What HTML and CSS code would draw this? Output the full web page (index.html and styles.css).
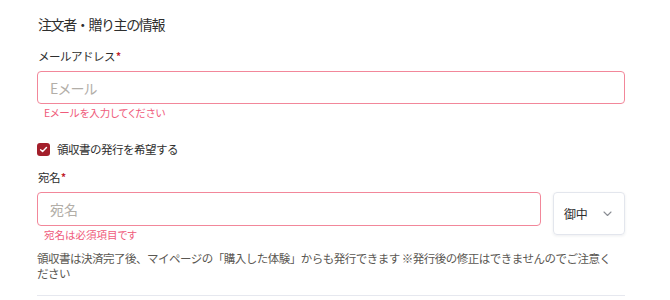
FILE: index.html
```html
<!DOCTYPE html>
<html lang="ja">
<head>
<meta charset="utf-8">
<link rel="stylesheet" href="styles.css">
</head>
<body>
<div class="form">
  <h2 class="heading">注文者・贈り主の情報</h2>

  <div class="label">メールアドレス<span class="req">*</span></div>
  <div class="input error-input"><span class="placeholder">Eメール</span></div>
  <div class="error">Eメールを入力してください</div>

  <label class="check-row">
    <span class="checkbox">
      <svg width="9" height="9" viewBox="0 0 10 10"><path d="M1.8 5.2 L4 7.3 L8.3 2.8" fill="none" stroke="#fff" stroke-width="1.6" stroke-linecap="round" stroke-linejoin="round"/></svg>
    </span>
    <span class="check-label">領収書の発行を希望する</span>
  </label>

  <div class="label label-name">宛名<span class="req">*</span></div>
  <div class="name-row">
    <div class="name-col">
      <div class="input error-input input-name"><span class="placeholder">宛名</span></div>
      <div class="error">宛名は必須項目です</div>
    </div>
    <div class="select">
      <span class="select-text">御中</span>
      <svg class="chevron" width="9" height="6" viewBox="0 0 9 6"><path d="M1 1 L4.5 4.5 L8 1" fill="none" stroke="#8a8d94" stroke-width="1.1" stroke-linecap="round" stroke-linejoin="round"/></svg>
    </div>
  </div>

  <p class="note">領収書は決済完了後、マイページの「購入した体験」からも発行できます ※発行後の修正はできませんのでご注意ください</p>

  <div class="divider"></div>
</div>
</body>
</html>
```
FILE: styles.css
```css
html, body {
  margin: 0;
  padding: 0;
  background: #fff;
}
body {
  font-family: "Noto Sans CJK JP", "Noto Sans", sans-serif;
  color: #2e2e2e;
}
.form {
  width: 588px;
  padding: 14px 0 0 37px;
}
.heading {
  margin: 0;
  font-size: 14px;
  line-height: 20px;
  font-weight: 400;
  letter-spacing: -1.4px;
  color: #2e2e2e;
  padding-left: 1px;
}
.label {
  margin-top: 13px;
  font-size: 11.5px;
  line-height: 18px;
  letter-spacing: -0.5px;
  color: #2e2e2e;
  padding-left: 1px;
}
.req {
  color: #c0202c;
  font-size: 10px;
  line-height: 1;
  font-weight: 700;
  margin-left: 1px;
  vertical-align: 1px;
}
.input {
  box-sizing: border-box;
  height: 33px;
  margin-top: 6px;
  border: 1px solid #f2879a;
  border-radius: 4px;
  display: flex;
  align-items: center;
  padding-left: 12px;
}
.placeholder {
  font-size: 14px;
  font-feature-settings: "palt";
  color: #b2aea8;
}
.error {
  margin-top: 2px;
  padding-left: 7px;
  font-size: 10.5px;
  line-height: 14px;
  font-feature-settings: "palt";
  color: #ef5b7b;
}
.check-row {
  display: flex;
  align-items: center;
  gap: 7px;
  margin-top: 20px;
  height: 18px;
}
.checkbox {
  width: 13px;
  height: 13px;
  border-radius: 3px;
  background: #a31f2b;
  display: flex;
  align-items: center;
  justify-content: center;
}
.check-label {
  font-size: 11.5px;
  line-height: 18px;
  letter-spacing: -0.5px;
  color: #2e2e2e;
}
.label-name {
  margin-top: 10px;
}
.name-row {
  display: flex;
  gap: 12px;
  align-items: flex-start;
  margin-top: 6px;
}
.name-col {
  flex: 1;
}
.input-name {
  margin-top: 0;
  height: 34px;
}
.name-col .error {
  margin-top: 2px;
}
.select {
  box-sizing: border-box;
  width: 72px;
  height: 43px;
  border: 1px solid #e3e6ed;
  border-radius: 4px;
  box-shadow: 0 1px 3px rgba(30, 40, 60, 0.08);
  display: flex;
  align-items: center;
  justify-content: space-between;
  padding: 0 12px 0 10px;
}
.select-text {
  font-size: 12px;
  letter-spacing: -0.3px;
  color: #2e2e2e;
}
.chevron {
  display: block;
}
.note {
  margin: 9px 0 0 0;
  width: 582px;
  font-size: 11.5px;
  line-height: 15px;
  letter-spacing: -0.5px;
  color: #5a5752;
}
.divider {
  margin-top: 14px;
  height: 1px;
  background: #e6e8ef;
  width: 588px;
}
```
